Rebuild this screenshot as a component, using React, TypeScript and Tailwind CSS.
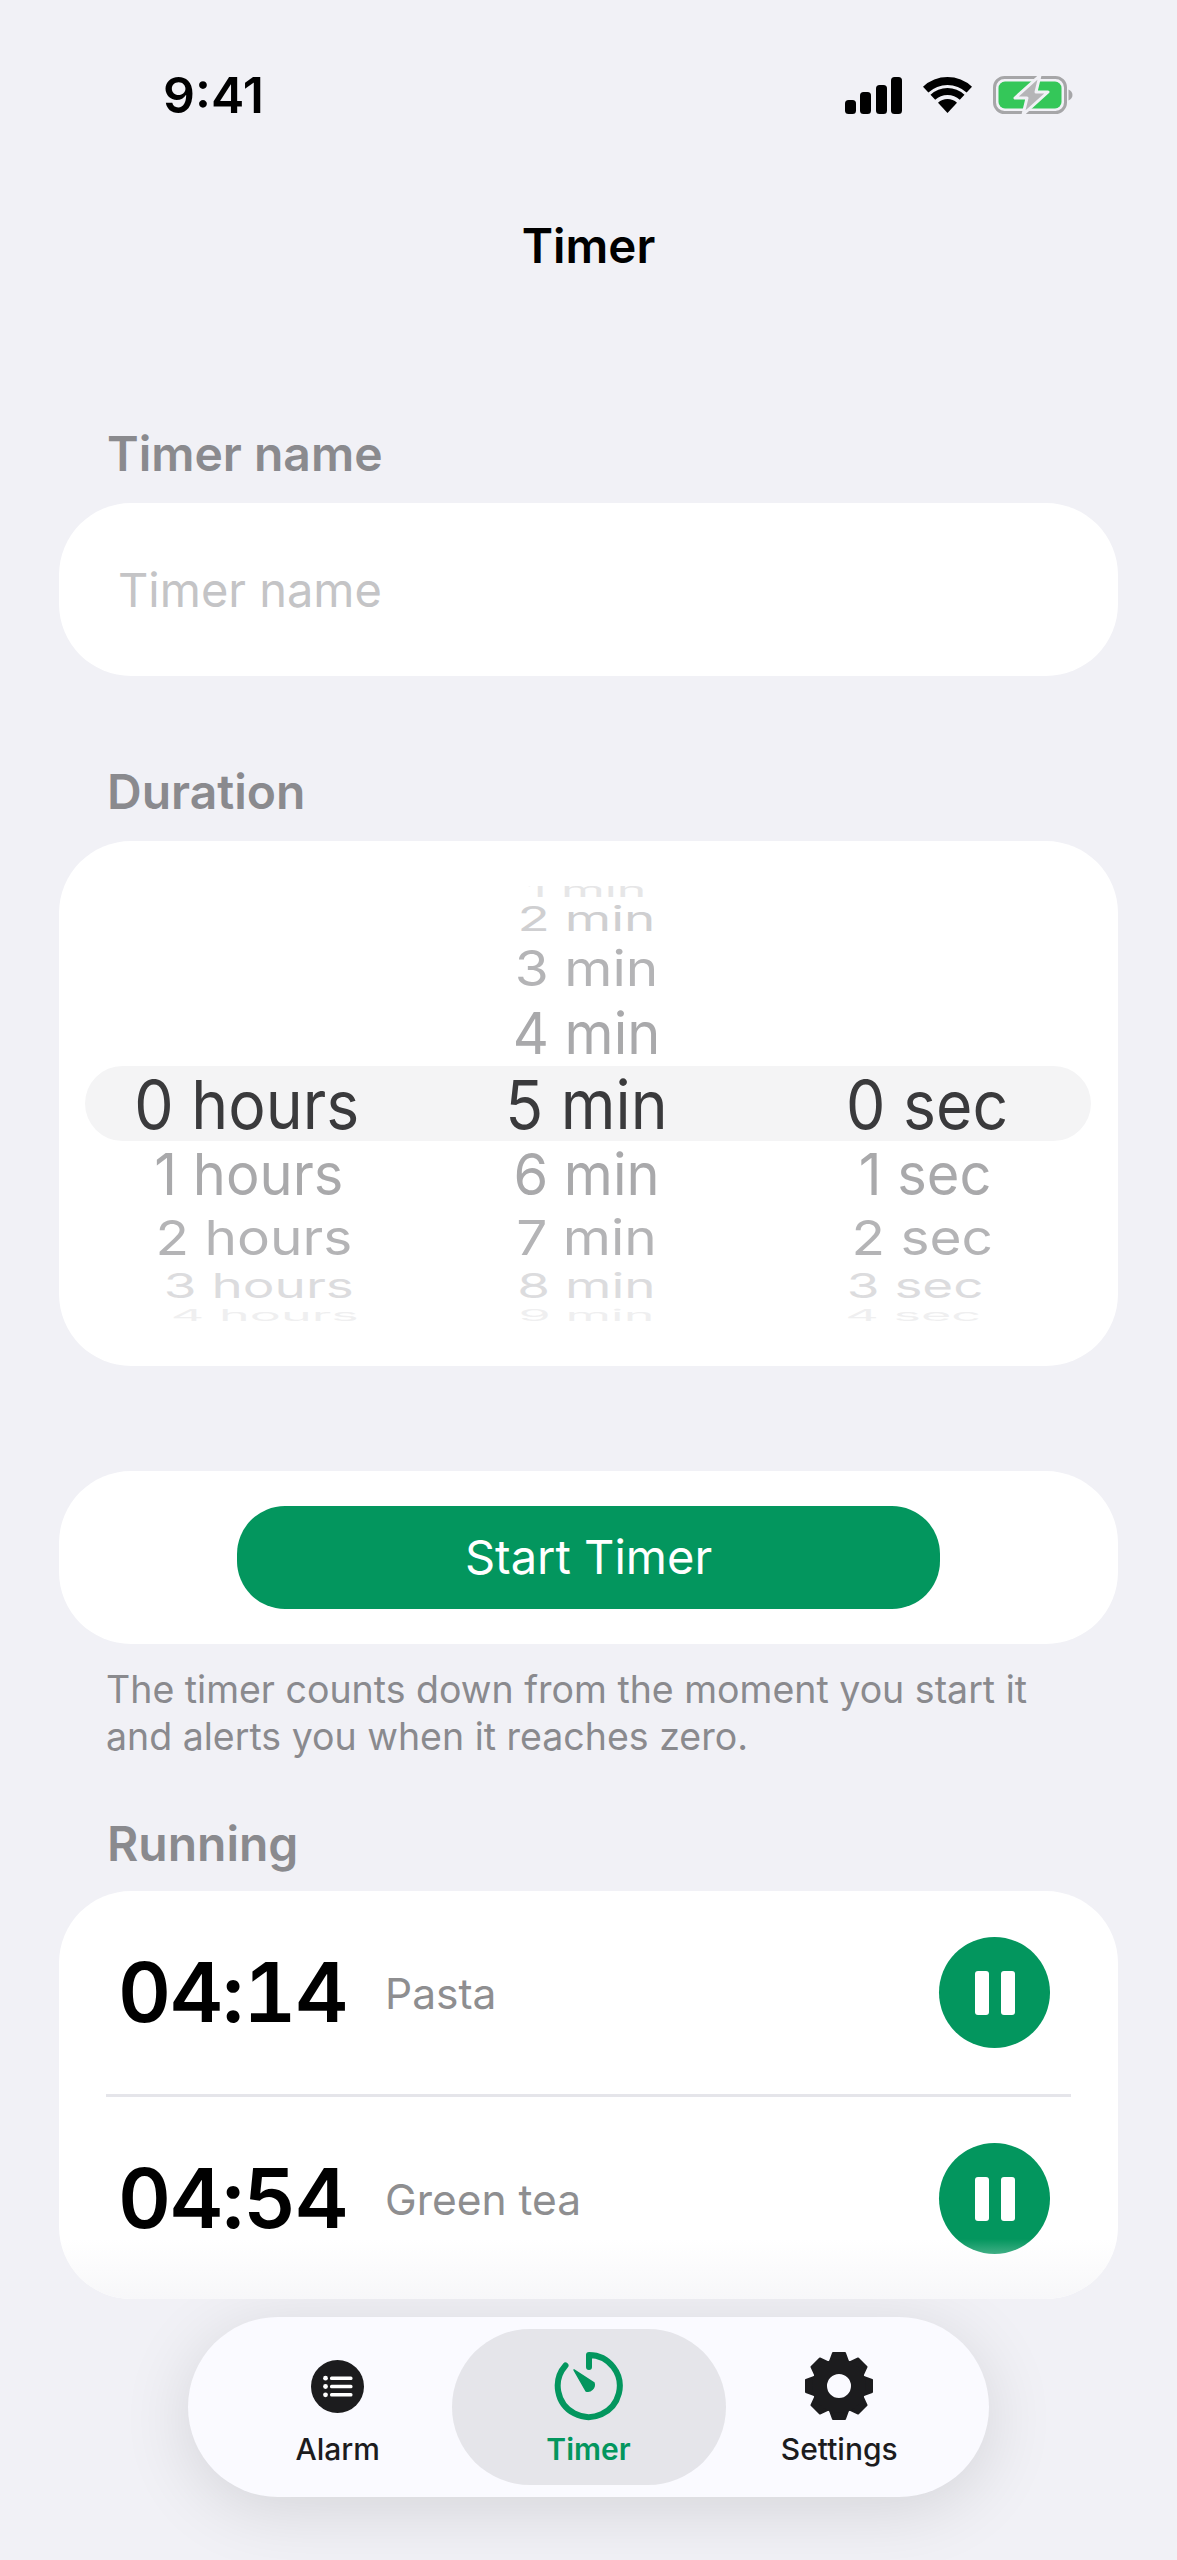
import React from 'react';

const FONT = "font-['Inter','Noto_Sans',sans-serif]";

type WheelItem = { label: string; h: number; cls: string; scale: number; dx?: number; dy?: number };

const hours: WheelItem[] = [
  { label: '0 hours', h: 75, cls: 'text-[#3a3a3c] text-[62.5px]', scale: 1.08 },
  { label: '1 hours', h: 63, cls: 'text-[#a9a9ab] text-[56px]', scale: 1.03, dx: 2 },
  { label: '2 hours', h: 65, cls: 'text-[#b4b4b6] text-[55px]', scale: 0.88, dx: 7 },
  { label: '3 hours', h: 33, cls: 'text-[#dcdcde] text-[53px]', scale: 0.64, dx: 12 },
  { label: '4 hours', h: 25, cls: 'text-[#efeff0] text-[52px]', scale: 0.3, dx: 18 },
];

const mins: WheelItem[] = [
  { label: '1 min', h: 14, cls: 'text-[#e6e6e7] text-[50px]', scale: 0.4, dy: -3 },
  { label: '2 min', h: 39, cls: 'text-[#cfcfd1] text-[53px]', scale: 0.64 },
  { label: '3 min', h: 59, cls: 'text-[#b4b4b6] text-[55px]', scale: 0.9 },
  { label: '4 min', h: 69, cls: 'text-[#a9a9ab] text-[56px]', scale: 1.03 },
  { label: '5 min', h: 75, cls: 'text-[#3a3a3c] text-[62.5px]', scale: 1.08 },
  { label: '6 min', h: 63, cls: 'text-[#a9a9ab] text-[56px]', scale: 1.03 },
  { label: '7 min', h: 65, cls: 'text-[#b4b4b6] text-[55px]', scale: 0.88 },
  { label: '8 min', h: 33, cls: 'text-[#dcdcde] text-[53px]', scale: 0.64 },
  { label: '9 min', h: 25, cls: 'text-[#efeff0] text-[52px]', scale: 0.3 },
];

const secs: WheelItem[] = [
  { label: '0 sec', h: 75, cls: 'text-[#3a3a3c] text-[62.5px]', scale: 1.08 },
  { label: '1 sec', h: 63, cls: 'text-[#a9a9ab] text-[56px]', scale: 1.03, dx: -2 },
  { label: '2 sec', h: 65, cls: 'text-[#b4b4b6] text-[55px]', scale: 0.88, dx: -5 },
  { label: '3 sec', h: 33, cls: 'text-[#dcdcde] text-[53px]', scale: 0.64, dx: -12 },
  { label: '4 sec', h: 25, cls: 'text-[#efeff0] text-[52px]', scale: 0.3, dx: -14 },
];

const WheelRow = ({ item }: { item: WheelItem }) => (
  <div className="flex items-center justify-center" style={{ height: item.h }}>
    <span
      className={`whitespace-nowrap leading-none ${item.cls}`}
      style={{ transform: `translate(${item.dx ?? 0}px, ${item.dy ?? 0}px) scaleY(${item.scale})` }}
    >
      {item.label}
    </span>
  </div>
);

const SignalIcon = () => (
  <svg width="57" height="37" viewBox="0 0 57 37" fill="#000">
    <rect x="0" y="23" width="11" height="14" rx="3.5" />
    <rect x="15" y="15" width="11" height="22" rx="3.5" />
    <rect x="31" y="8" width="11" height="29" rx="3.5" />
    <rect x="46" y="0" width="11" height="37" rx="3.5" />
  </svg>
);

const WifiIcon = () => (
  <svg width="49" height="36" viewBox="0 0 49 36" fill="#000">
    <path d="M0 9.7A36 36 0 0 1 49 9.7L43.6 15.5A28 28 0 0 0 5.4 15.5Z" />
    <path d="M7.5 17.7A25 25 0 0 1 41.5 17.7L36.8 22.8A18 18 0 0 0 12.2 22.8Z" />
    <path d="M15 25.8A14 14 0 0 1 34 25.8L24.5 36Z" />
  </svg>
);

const BatteryIcon = () => (
  <svg width="80" height="40" viewBox="0 0 80 40">
    <rect x="1.5" y="2.5" width="71" height="35" rx="10" fill="none" stroke="#a6a6a8" strokeWidth="3" />
    <rect x="5.5" y="6.5" width="63" height="27" rx="6.5" fill="#34c759" />
    <path d="M75.5 14.5C78 15.5 79.5 17.5 79.5 20C79.5 22.5 78 24.5 75.5 25.5Z" fill="#a6a6a8" />
    <path
      d="M47 0.5L22 23H34L30 39.5L55 17H43Z"
      fill="#b5b5b7"
      stroke="#f1f1f6"
      strokeWidth="3"
      strokeLinejoin="round"
    />
  </svg>
);

const AlarmIcon = () => (
  <svg width="53" height="53" viewBox="0 0 53 53">
    <circle cx="26.5" cy="26.5" r="26.5" fill="#1c1c1e" />
    <circle cx="14.5" cy="18.2" r="2.4" fill="#fff" />
    <circle cx="14.5" cy="26.5" r="2.4" fill="#fff" />
    <circle cx="14.5" cy="34.8" r="2.4" fill="#fff" />
    <rect x="19" y="16.5" width="22.5" height="3.5" rx="1.5" fill="#fff" />
    <rect x="19" y="24.8" width="22.5" height="3.5" rx="1.5" fill="#fff" />
    <rect x="19" y="33.1" width="22.5" height="3.5" rx="1.5" fill="#fff" />
  </svg>
);

const TimerIcon = () => (
  <svg width="72" height="72" viewBox="0 0 72 72" fill="none">
    <path
      d="M36 17V5A31 31 0 1 1 12.5 15.5"
      stroke="#03965e"
      strokeWidth="6"
      strokeLinecap="round"
      strokeLinejoin="round"
    />
    <path d="M21 20L41 33A6.5 6.5 0 0 1 33 41Z" fill="#03965e" stroke="#03965e" strokeWidth="1.5" strokeLinejoin="round" />
  </svg>
);

const GearIcon = () => {
  const teeth = [0, 45, 90, 135, 180, 225, 270, 315];
  return (
    <svg width="72" height="72" viewBox="0 0 72 72">
      {teeth.map((a) => (
        <path
          key={a}
          d="M26 14L30 3H42L46 14Z"
          fill="#1c1c1e"
          stroke="#1c1c1e"
          strokeWidth="2"
          strokeLinejoin="round"
          transform={`rotate(${a} 36 36)`}
        />
      ))}
      <circle cx="36" cy="36" r="19.5" fill="none" stroke="#1c1c1e" strokeWidth="15" />
    </svg>
  );
};

const PauseButton = () => (
  <button className="flex h-[111px] w-[111px] items-center justify-center gap-[12px] rounded-full bg-[#03965e]">
    <span className="h-[44px] w-[14px] rounded-[3px] bg-white" />
    <span className="h-[44px] w-[14px] rounded-[3px] bg-white" />
  </button>
);

const SectionLabel = ({ children }: { children: React.ReactNode }) => (
  <div className="ml-[107px] text-[48px] font-semibold leading-[56px] text-[#8a8a8e]">{children}</div>
);

const TimerRow = ({ time, name }: { time: string; name: string }) => (
  <div className="flex h-[203px] items-center pl-[59px] pr-[68px]">
    <div className="w-[267px] text-[82px] font-semibold leading-none tracking-[-1px] text-black tabular-nums">{time}</div>
    <div className="mt-[3px] flex-1 text-[42.5px] leading-none text-[#8e8e90]">{name}</div>
    <PauseButton />
  </div>
);

export default function App() {
  return (
    <div className={`${FONT} relative h-[2560px] w-[1177px] overflow-hidden bg-[#f1f1f6]`}>
      {/* Status bar */}
      <div className="flex items-center justify-between pl-[163px] pr-[104px] pt-[67px]">
        <div className="text-[50px] font-semibold leading-[56px] text-black">9:41</div>
        <div className="flex items-center gap-[21px]">
          <SignalIcon />
          <WifiIcon />
          <BatteryIcon />
        </div>
      </div>

      <h1 className="mt-[95px] text-center text-[47.5px] font-semibold leading-[56px] text-black">Timer</h1>

      <div className="mt-[152px]">
        <SectionLabel>Timer name</SectionLabel>
      </div>
      <div className="mx-[59px] mt-[21px] flex h-[173px] items-center rounded-[72px] bg-white pl-[59px] pt-[2px] text-[47px] text-[#c4c4c6]">
        Timer name
      </div>

      <div className="mt-[88px]">
        <SectionLabel>Duration</SectionLabel>
      </div>
      <div className="relative mx-[59px] mt-[21px] h-[525px] rounded-[72px] bg-white pt-[45px]">
        {/* Selected row highlight */}
        <div className="absolute left-[26px] right-[27px] top-[225px] h-[75px] rounded-[38px] bg-[#f4f4f5]" />
        <div className="relative grid h-[435px] grid-cols-3 overflow-hidden px-[17px]">
          <div className="flex flex-col pt-[181px]">
            {hours.map((item) => (
              <WheelRow key={item.label} item={item} />
            ))}
          </div>
          <div className="-ml-[4px] flex flex-col">
            {mins.map((item) => (
              <WheelRow key={item.label} item={item} />
            ))}
          </div>
          <div className="-ml-[6px] flex flex-col pt-[181px]">
            {secs.map((item) => (
              <WheelRow key={item.label} item={item} />
            ))}
          </div>
        </div>
      </div>

      <div className="mx-[59px] mt-[105px] flex h-[173px] items-center justify-center rounded-[72px] bg-white">
        <button className="h-[103px] w-[703px] rounded-[48px] bg-[#03965e] text-[47px] text-white">Start Timer</button>
      </div>

      <p className="ml-[106px] mt-[22px] w-[1040px] text-[37.5px] leading-[47px] text-[#8a8a8e]">
        The timer counts down from the moment you start it
        <br />
        and alerts you when it reaches zero.
      </p>

      <div className="mt-[56px]">
        <SectionLabel>Running</SectionLabel>
      </div>
      <div className="relative mx-[59px] mt-[19px] h-[408px] overflow-hidden rounded-[72px] bg-white">
        <TimerRow time="04:14" name="Pasta" />
        <div className="mx-[47px] h-[3px] bg-[#e5e5ea]" />
        <TimerRow time="04:54" name="Green tea" />
        {/* Fade under the tab bar */}
        <div className="absolute inset-x-0 bottom-0 h-[60px] bg-gradient-to-b from-white/0 to-[#f7f7f9]" />
      </div>

      {/* Tab bar */}
      <div className="mx-[188px] mt-[18px] flex h-[180px] items-center rounded-[90px] bg-[#fafaff] px-[12px] shadow-[0_12px_70px_rgba(0,0,0,0.12)]">
        <div className="flex h-[156px] flex-1 flex-col items-center pl-[24px] pt-[21px]">
          <div className="flex h-[72px] items-center">
            <AlarmIcon />
          </div>
          <span className="mt-[10px] text-[30px] font-medium leading-[34px] text-[#1c1c1e]">Alarm</span>
        </div>
        <div className="flex h-[156px] w-[274px] flex-col items-center rounded-[78px] bg-[#e5e5ea] pt-[21px]">
          <TimerIcon />
          <span className="mt-[10px] text-[30px] font-semibold leading-[34px] text-[#03965e]">Timer</span>
        </div>
        <div className="flex h-[156px] flex-1 flex-col items-center pr-[24px] pt-[21px]">
          <GearIcon />
          <span className="mt-[10px] text-[30px] font-medium leading-[34px] text-[#1c1c1e]">Settings</span>
        </div>
      </div>
    </div>
  );
}
